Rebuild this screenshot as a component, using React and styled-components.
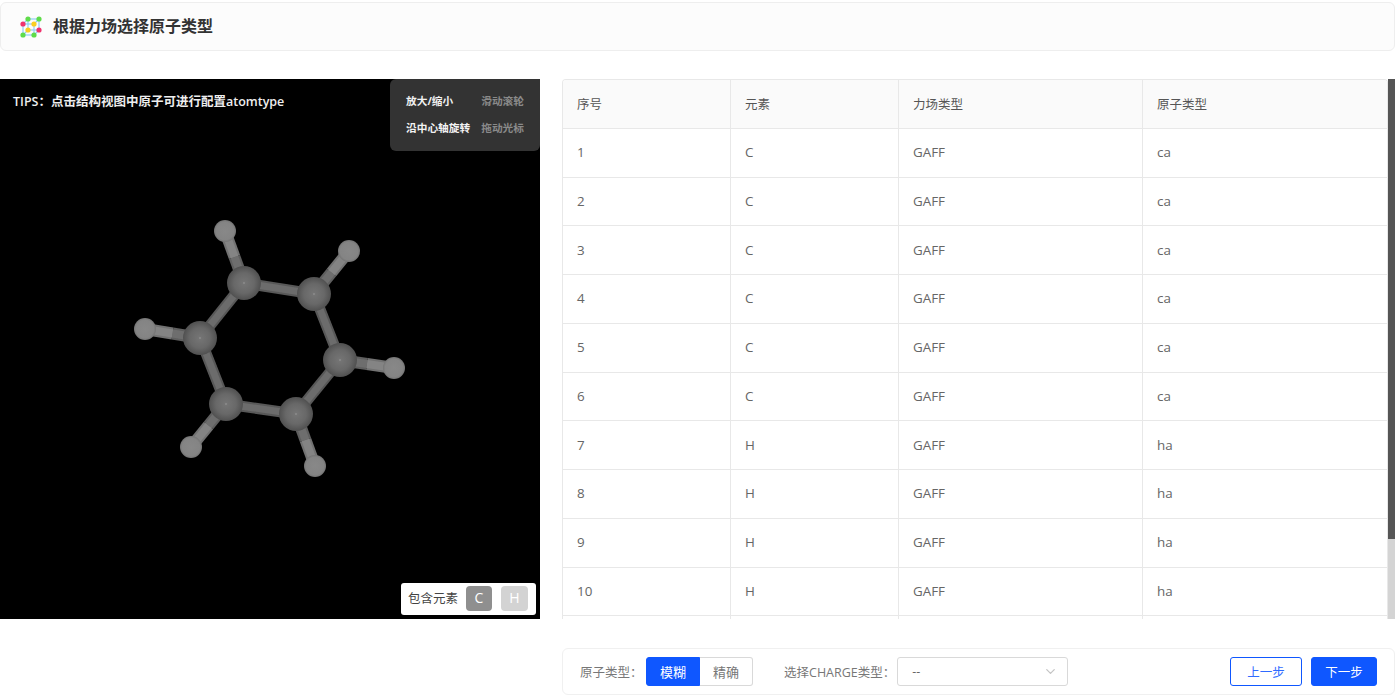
import React from "react";
import styled, { createGlobalStyle } from "styled-components";
import { ChevronDown } from "lucide-react";

const FONT = `"Open Sans", "Noto Sans CJK SC", sans-serif`;

const GlobalStyle = createGlobalStyle`
  html, body {
    margin: 0;
    padding: 0;
    background: #fff;
    overflow: hidden;
    font-family: ${FONT};
  }
  * {
    box-sizing: border-box;
  }
`;

const Page = styled.div`
  width: 1396px;
  height: 696px;
  padding: 2px 1px 0 0;
`;

const Header = styled.header`
  display: flex;
  align-items: center;
  gap: 8px;
  height: 49px;
  padding-left: 18px;
  background: #fcfcfc;
  border: 1px solid #eeeeee;
  border-radius: 6px;
`;

const Title = styled.h1`
  margin: 0 0 2px;
  font-size: 16px;
  font-weight: 600;
  line-height: 22px;
  color: #333;
`;

const Content = styled.div`
  display: grid;
  grid-template-columns: 540px 1fr;
  column-gap: 22px;
  row-gap: 29px;
  margin-top: 28px;
`;

const Viewer = styled.div`
  position: relative;
  height: 540px;
  background: #000;
`;

const Tips = styled.div`
  position: absolute;
  left: 13px;
  top: 14px;
  font-size: 12.5px;
  font-weight: 600;
  line-height: 18px;
  color: #eeeeee;
`;

const HelpPanel = styled.div`
  position: absolute;
  right: 0;
  top: 0;
  width: 150px;
  height: 72px;
  padding: 13px 16px 14px;
  display: grid;
  grid-template-columns: 1fr auto;
  align-content: space-between;
  font-size: 10.7px;
  line-height: 18px;
  background: #333;
  border-radius: 6px 0 6px 6px;
`;

const HelpKey = styled.span`
  font-weight: 700;
  color: #f2f2f2;
`;

const HelpValue = styled.span`
  font-weight: 600;
  color: #8a8a8a;
`;

const Legend = styled.div`
  position: absolute;
  right: 4px;
  bottom: 4px;
  display: flex;
  align-items: center;
  width: 135px;
  height: 32px;
  padding: 0 0 1px 7px;
  font-size: 12.5px;
  line-height: 18px;
  color: #444;
  background: #fff;
  border-radius: 3px;
`;

const Chip = styled.span`
  display: flex;
  align-items: center;
  justify-content: center;
  width: ${(p) => p.$width}px;
  height: 25px;
  margin-left: ${(p) => p.$gap}px;
  padding-bottom: 1px;
  font-size: 14px;
  color: #fff;
  background: ${(p) => p.$color};
  border-radius: 4px;
`;

const TableArea = styled.div`
  display: flex;
  height: 540px;
`;

const TableClip = styled.div`
  flex: 1;
  overflow: hidden;
  border: 1px solid #e8e8e8;
  border-width: 1px 1px 0 1px;
  border-radius: 4px 4px 0 0;
`;

const ScrollTrack = styled.div`
  width: 7px;
  background: #d4d4d4;
`;

const ScrollThumb = styled.div`
  height: 460px;
  background: #555;
`;

const Row = styled.div`
  display: grid;
  grid-template-columns: 168px 168px 244px 1fr;
  height: 48.75px;
  font-size: ${(p) => (p.$head ? 12.5 : 13.4)}px;
  color: ${(p) => (p.$head ? "#555" : "#666")};
  background: ${(p) => (p.$head ? "#fafafa" : "#fff")};
  border-bottom: 1px solid #e8e8e8;
`;

const Cell = styled.div`
  display: flex;
  align-items: center;
  padding: 0 0 1.25px 14px;
  border-right: 1px solid #e8e8e8;

  &:last-child {
    border-right: none;
  }
`;

const Footer = styled.footer`
  grid-column: 2;
  display: flex;
  align-items: center;
  height: 47px;
  padding: 0 17px;
  font-size: 12.5px;
  color: #777;
  border: 1px solid #f0f0f0;
  border-radius: 6px;
`;

const Label = styled.span`
  margin-right: ${(p) => p.$gap}px;
  padding-bottom: 1px;
  white-space: nowrap;
`;

const Segment = styled.div`
  display: flex;
  width: 107px;
  height: 29px;
  margin-right: 31px;
  font-size: 13px;
`;

const SegmentItem = styled.div`
  flex: 1;
  display: flex;
  align-items: center;
  justify-content: center;
  padding-bottom: 1px;
  color: ${(p) => (p.$active ? "#fff" : "#777")};
  background: ${(p) => (p.$active ? "#0f57ff" : "#fff")};
  border: 1px solid ${(p) => (p.$active ? "#0f57ff" : "#d9d9d9")};
  border-left-width: ${(p) => (p.$active ? 1 : 0)}px;
  border-radius: ${(p) => (p.$active ? "3px 0 0 3px" : "0 3px 3px 0")};
`;

const Select = styled.div`
  display: flex;
  align-items: center;
  justify-content: space-between;
  width: 171px;
  height: 29px;
  padding: 0 9px 0 14px;
  color: #666;
  border: 1px solid #d9d9d9;
  border-radius: 3px;
`;

const Actions = styled.div`
  display: flex;
  gap: 9px;
  margin-left: auto;
`;

const Button = styled.button`
  width: ${(p) => p.$width}px;
  height: 29px;
  padding: 0 0 1px;
  font-family: inherit;
  font-size: 12.5px;
  color: ${(p) => (p.$primary ? "#fff" : "#2f6bff")};
  background: ${(p) => (p.$primary ? "#0f57ff" : "#fff")};
  border: 1px solid #0f57ff;
  border-radius: 3px;
`;

const rows = [
  [1, "C", "ca"],
  [2, "C", "ca"],
  [3, "C", "ca"],
  [4, "C", "ca"],
  [5, "C", "ca"],
  [6, "C", "ca"],
  [7, "H", "ha"],
  [8, "H", "ha"],
  [9, "H", "ha"],
  [10, "H", "ha"],
];

const carbons = [
  [244, 283],
  [314, 294],
  [340, 360],
  [296, 414],
  [226, 404],
  [200, 338],
];

const hydrogens = [
  [225, 231],
  [349, 251],
  [394, 368],
  [315, 466],
  [191, 447],
  [145, 329],
];

const LogoIcon = () => (
  <svg width="26" height="26" viewBox="0 -2 26 26">
    <g stroke="#8fcdf5" strokeWidth="1.2" fill="none">
      <rect x="4" y="8" width="11" height="11" />
      <rect x="9" y="3" width="11" height="11" />
      <path d="M4 8 9 3M15 8l5-5M4 19l5-5M15 19l5-5" />
    </g>
    <circle cx="9" cy="3" r="2.6" fill="#5fdc4a" />
    <circle cx="20" cy="3" r="2.6" fill="#5fdc4a" />
    <circle cx="4" cy="8" r="2.6" fill="#f0326e" />
    <circle cx="15" cy="8" r="2.6" fill="#fbce1e" />
    <circle cx="20" cy="14" r="2.6" fill="#f0326e" />
    <circle cx="9" cy="14" r="2.6" fill="#fbce1e" />
    <circle cx="4" cy="19" r="2.6" fill="#5fdc4a" />
    <circle cx="15" cy="19" r="2.6" fill="#5fdc4a" />
  </svg>
);

// ball and stick benzene, coordinates are taken from the page so the viewBox starts at the viewer top
const Molecule = () => (
  <svg width="540" height="540" viewBox="0 79 540 540">
    <defs>
      <radialGradient id="carbon" cx="50%" cy="50%" r="50%">
        <stop offset="0%" stopColor="#989898" />
        <stop offset="8%" stopColor="#747474" />
        <stop offset="60%" stopColor="#686868" />
        <stop offset="100%" stopColor="#505050" />
      </radialGradient>
      <radialGradient id="hydrogen" cx="50%" cy="50%" r="50%">
        <stop offset="0%" stopColor="#888" />
        <stop offset="80%" stopColor="#848484" />
        <stop offset="100%" stopColor="#747474" />
      </radialGradient>
      <filter id="soft" x="-5%" y="-5%" width="110%" height="110%">
        <feGaussianBlur stdDeviation="0.7" />
      </filter>
    </defs>
    <g filter="url(#soft)">
      {carbons.map((c, i) => {
        const n = carbons[(i + 1) % 6];
        return (
          <g key={i}>
            <line x1={c[0]} y1={c[1]} x2={n[0]} y2={n[1]} stroke="#585858" strokeWidth="11" />
            <line x1={c[0]} y1={c[1]} x2={n[0]} y2={n[1]} stroke="#6c6c6c" strokeWidth="7" />
          </g>
        );
      })}
      {carbons.map((c, i) => {
        const h = hydrogens[i];
        const mx = (c[0] + h[0]) / 2;
        const my = (c[1] + h[1]) / 2;
        return (
          <g key={i}>
            <line x1={c[0]} y1={c[1]} x2={mx} y2={my} stroke="#5e5e5e" strokeWidth="12" />
            <line x1={c[0]} y1={c[1]} x2={mx} y2={my} stroke="#6e6e6e" strokeWidth="8" />
            <line x1={mx} y1={my} x2={h[0]} y2={h[1]} stroke="#727272" strokeWidth="12" />
            <line x1={mx} y1={my} x2={h[0]} y2={h[1]} stroke="#848484" strokeWidth="8" />
          </g>
        );
      })}
    </g>
    {carbons.map((c, i) => (
      <circle key={i} cx={c[0]} cy={c[1]} r="17" fill="url(#carbon)" />
    ))}
    {hydrogens.map((h, i) => (
      <circle key={i} cx={h[0]} cy={h[1]} r="11" fill="url(#hydrogen)" />
    ))}
  </svg>
);

const App = () => {
  return (
    <Page>
      <GlobalStyle />
      <Header>
        <LogoIcon />
        <Title>根据力场选择原子类型</Title>
      </Header>
      <Content>
        <Viewer>
          <Molecule />
          <Tips>TIPS：点击结构视图中原子可进行配置atomtype</Tips>
          <HelpPanel>
            <HelpKey>放大/缩小</HelpKey>
            <HelpValue>滑动滚轮</HelpValue>
            <HelpKey>沿中心轴旋转</HelpKey>
            <HelpValue>拖动光标</HelpValue>
          </HelpPanel>
          <Legend>
            包含元素
            <Chip $width={26} $gap={8} $color="#8f8f8f">C</Chip>
            <Chip $width={27} $gap={9} $color="#d3d3d3">H</Chip>
          </Legend>
        </Viewer>
        <TableArea>
          <TableClip>
            <Row $head>
              <Cell>序号</Cell>
              <Cell>元素</Cell>
              <Cell>力场类型</Cell>
              <Cell>原子类型</Cell>
            </Row>
            {rows.map((r) => (
              <Row key={r[0]}>
                <Cell>{r[0]}</Cell>
                <Cell>{r[1]}</Cell>
                <Cell>GAFF</Cell>
                <Cell>{r[2]}</Cell>
              </Row>
            ))}
            <Row>
              <Cell />
              <Cell />
              <Cell />
              <Cell />
            </Row>
          </TableClip>
          <ScrollTrack>
            <ScrollThumb />
          </ScrollTrack>
        </TableArea>
        <Footer>
          <Label $gap={3.5}>原子类型：</Label>
          <Segment>
            <SegmentItem $active>模糊</SegmentItem>
            <SegmentItem>精确</SegmentItem>
          </Segment>
          <Label $gap={2}>选择CHARGE类型：</Label>
          <Select>
            --
            <ChevronDown size={15} color="#c4c4c4" />
          </Select>
          <Actions>
            <Button $width={72}>上一步</Button>
            <Button $width={66} $primary>下一步</Button>
          </Actions>
        </Footer>
      </Content>
    </Page>
  );
};

export default App;
